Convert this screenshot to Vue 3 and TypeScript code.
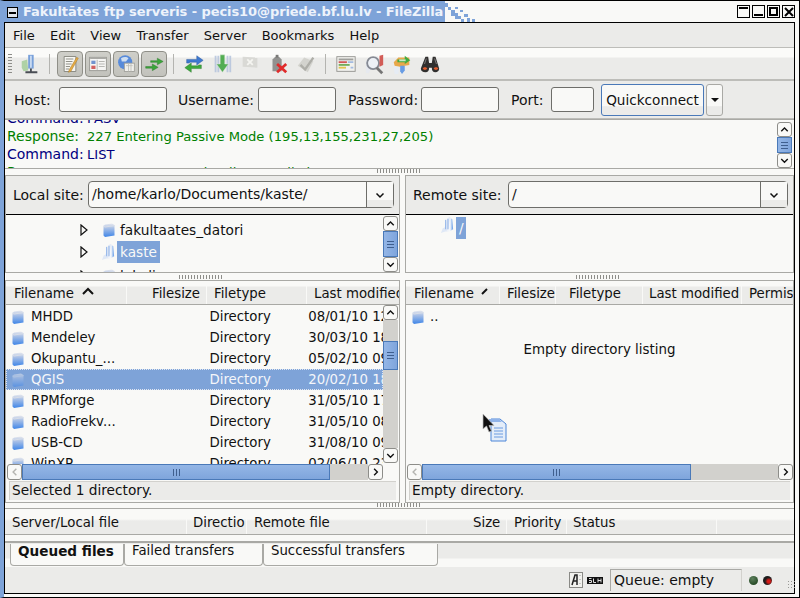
<template>
  <div class="window">
    <svg class="defs" width="0" height="0" aria-hidden="true">
      <defs>
        <linearGradient id="fold" x1="0" y1="0" x2="0" y2="1">
          <stop offset="0" stop-color="#e6e8ee" />
          <stop offset="0.35" stop-color="#a9c0e6" />
          <stop offset="1" stop-color="#3f86e8" />
        </linearGradient>
        <linearGradient id="open" x1="0" y1="0" x2="1" y2="0">
          <stop offset="0" stop-color="#e8edf6" />
          <stop offset="0.6" stop-color="#f6f8fb" />
          <stop offset="1" stop-color="#5d97e6" />
        </linearGradient>
        <symbol id="folder" viewBox="0 0 12 14">
          <path d="M2 1.5 9 0.5 11.5 2V12.5L2 14 0.5 12.5V3Z" fill="url(#fold)" />
          <path d="M0.5 3 2 4 11.5 2.6" fill="none" stroke="#d7dde8" />
        </symbol>
        <symbol id="folderopen" viewBox="0 0 16 18">
          <path d="M8 1 11 0V14L4 16 1 17 3 12 5 11 7 3Z" fill="#dfe8f6" />
          <path d="M10.5 1 13 2 14 13 10 15.5 6 16 9 12Z" fill="url(#open)" />
          <path d="M6 3V13M8.5 2V13" stroke="#8cb0e6" />
        </symbol>
        <symbol id="up" viewBox="0 0 14 14"><path d="M3.5 9 7 5.5 10.5 9" fill="none" stroke="#111" stroke-width="1.5" /></symbol>
        <symbol id="down" viewBox="0 0 14 14"><path d="M3.5 5.5 7 9 10.5 5.5" fill="none" stroke="#111" stroke-width="1.5" /></symbol>
        <symbol id="left" viewBox="0 0 14 14"><path d="M9 3.5 5.5 7 9 10.5" fill="none" stroke="#b5b5b1" stroke-width="1.5" /></symbol>
        <symbol id="right" viewBox="0 0 14 14"><path d="M5.5 3.5 9 7 5.5 10.5" fill="none" stroke="#111" stroke-width="1.5" /></symbol>
      </defs>
    </svg>

    <header class="titlebar">
      <span class="win-btn menu-btn"><i class="bar mid"></i></span>
      <div class="title-fill">
        <span class="title-text">Fakultātes ftp serveris - pecis10@priede.bf.lu.lv - FileZilla</span>
        <svg class="checker" width="32" height="21" viewBox="0 0 32 21">
          <path d="M0 2h3v4h3v3H3V6H0zM6 9h4v3h3v3h3v3h-6v-3H6zM10 6h3v2h-3zM15 9h3v2h-3zM19 13h4v3h-4zM16 18h3v3h-3zM22 17h3v4h-3zM27 18h3v3h-3z" fill="#7ea3d8" />
        </svg>
      </div>
      <div class="win-btns">
        <span class="win-btn"><i class="bar top"></i></span>
        <span class="win-btn"><i class="bar bottom"></i></span>
        <span class="win-btn"><i class="square"></i></span>
        <span class="win-btn close">
          <svg width="10" height="10" viewBox="0 0 10 10"><path d="M1 1 9 9M9 1 1 9" stroke="#000" stroke-width="2" /></svg>
        </span>
      </div>
    </header>

    <div class="frame">
      <nav class="menubar">
        <span v-for="m in menus" :key="m">{{ m }}</span>
      </nav>

      <div class="toolbar">
        <span class="grip"></span>
        <span class="tool first">
          <svg viewBox="0 0 24 24" width="24" height="24">
            <path d="M3 9 9 7 10 19 5 20 3 16Z" fill="#a9cfa0" />
            <rect x="10" y="2" width="6" height="15" fill="#6f9ad8" />
            <rect x="12" y="3" width="2" height="13" fill="#c6d9f2" />
            <path d="M13 17V20M7 21H20" stroke="#3c4048" stroke-width="2" />
          </svg>
        </span>
        <span class="sep s1"></span>
        <span class="tool pressed">
          <svg viewBox="0 0 24 24" width="24" height="24">
            <path d="M5 3H19V21H5Z" fill="#fbfbf7" stroke="#77776f" />
            <path d="M7 6H16M7 9H15M7 12H14M7 15H12M7 18H11" stroke="#77776f" />
            <path d="M20 4 22 5 13 21 10 22 11 19Z" fill="#e8a93a" stroke="#9a6a1a" stroke-width="0.5" />
          </svg>
        </span>
        <span class="tool pressed">
          <svg viewBox="0 0 24 24" width="24" height="24">
            <rect x="2" y="4" width="20" height="16" fill="#fafaf8" stroke="#8c8c86" />
            <path d="M2.5 5H21.5" stroke="#a8a8a4" stroke-width="2" />
            <rect x="4" y="8" width="5" height="4" fill="#6a8fd0" />
            <rect x="4" y="14" width="5" height="4" fill="#d25a5a" />
            <path d="M11 7V19M13 9H20M13 12H20M13 15H20" stroke="#a8a8a4" />
          </svg>
        </span>
        <span class="tool pressed">
          <svg viewBox="0 0 24 24" width="24" height="24">
            <circle cx="11" cy="10" r="8.5" fill="#4f86dc" />
            <path d="M6 5C9 3 13 3 15 5L12 9 7 9Z" fill="#cfe0f5" />
            <rect x="10" y="11" width="12" height="10" fill="#f4f4f0" stroke="#9a9a94" />
            <path d="M12 14H20M15 11V21M18 11V21" stroke="#bcbcb6" />
          </svg>
        </span>
        <span class="tool pressed">
          <svg viewBox="0 0 24 24" width="24" height="24">
            <path d="M8 8H16V5L23 9 16 13V10H8Z" fill="#2fa32f" stroke="#1d6b1d" stroke-width="0.5" />
            <path d="M2 15H10V12L17 16 10 20V17H2Z" fill="#2fa32f" stroke="#1d6b1d" stroke-width="0.5" />
          </svg>
        </span>
        <span class="sep s2"></span>
        <span class="tool plain">
          <svg viewBox="0 0 24 24" width="24" height="24">
            <path d="M4 11V7H15V3L22 8 15 13V10H7V11Z" fill="#2f70cf" stroke="#1c4b93" stroke-width="0.5" />
            <path d="M20 13V17H9V21L2 16 9 11V14H17V13Z" fill="#2ea52e" stroke="#1d6b1d" stroke-width="0.5" />
          </svg>
        </span>
        <span class="tool plain">
          <svg viewBox="0 0 24 24" width="24" height="24">
            <path d="M5 3V21M8 3V21M18 3V21M21 3V21" stroke="#b9c7de" stroke-width="2" />
            <path d="M10 2H15V12H19L12.500 21 6 12H10Z" fill="#46a846" stroke="#dfe8df" stroke-width="0.5" />
          </svg>
        </span>
        <span class="tool plain">
          <svg viewBox="0 0 24 24" width="24" height="24">
            <path d="M4 4 20 5V16L4 15Z" fill="#d8d8d4" />
            <path d="M9 7 15 13M15 7 9 13" stroke="#f6f6f2" stroke-width="2" />
          </svg>
        </span>
        <span class="tool plain">
          <svg viewBox="0 0 24 24" width="24" height="24">
            <path d="M6 7 9 4H13L16 7V20H6Z" fill="#8a8a88" />
            <rect x="9.500" y="2" width="3" height="3" fill="#6e6e6c" />
            <path d="M11 12 21 21M21 12 11 21" stroke="#e01b1b" stroke-width="3" />
          </svg>
        </span>
        <span class="tool plain">
          <svg viewBox="0 0 24 24" width="24" height="24">
            <path d="M3 14 10 5 20 9 14 21Z" fill="#d2d2cc" />
            <path d="M6 13 11 18 20 5" fill="none" stroke="#a9a9a3" stroke-width="2.500" />
          </svg>
        </span>
        <span class="sep s3"></span>
        <span class="tool plain">
          <svg viewBox="0 0 24 24" width="24" height="24">
            <rect x="2" y="4" width="20" height="16" fill="#f2f2ee" stroke="#8d8d89" />
            <path d="M4 7H20" stroke="#9a9a96" stroke-width="2" />
            <path d="M4 10H13" stroke="#d24a4a" stroke-width="2" />
            <path d="M4 13H16" stroke="#6aa84f" stroke-width="2" />
            <path d="M4 16H12" stroke="#e0c040" stroke-width="2" />
            <path d="M14 10H20M17 16H20" stroke="#9db8e0" stroke-width="2" />
          </svg>
        </span>
        <span class="tool plain">
          <svg viewBox="0 0 24 24" width="24" height="24">
            <path d="M3 9 16 3V6L6 22H3Z" fill="#e6e9f0" />
            <circle cx="11" cy="11" r="6.500" fill="#eef2f8" stroke="#7d828c" stroke-width="2" />
            <path d="M15 16 21 22" stroke="#6c6c6c" stroke-width="3" />
            <path d="M18 3 22 2V13L18 15Z" fill="#d0504a" />
          </svg>
        </span>
        <span class="tool plain">
          <svg viewBox="0 0 24 24" width="24" height="24">
            <path d="M3 10 8 5H20V13L9 15 4 14Z" fill="#e8a33d" />
            <path d="M7 7H15V3L21 8 15 12V10H7Z" fill="#32a532" />
            <path d="M9 8H16" stroke="#c9e8c0" stroke-width="2" />
            <path d="M3 15H9L8 23H4Z" fill="#e6edf6" />
            <path d="M10 14H15V19L12 23 10 20Z" fill="#5d96e4" />
          </svg>
        </span>
        <span class="tool plain">
          <svg viewBox="0 0 24 24" width="24" height="24">
            <path d="M7 4H10L11 11H14L15 4H18L22 17C22 20 20 21 18 21 15 21 14 19 14 16H11C11 19 10 21 7 21 4 21 2 20 2 17Z" fill="#22201f" />
            <path d="M4 17C5 15 8 15 9 17 8 19 5 19 4 17ZM16 17C17 15 20 15 21 17 20 19 17 19 16 17Z" fill="#e2501f" />
            <path d="M8 6 6 12M17 6 19 12" stroke="#777" />
          </svg>
        </span>
      </div>

      <div class="quickbar">
        <label class="q-label first-label">Host:</label>
        <input class="q-input host" type="text" />
        <label class="q-label user">Username:</label>
        <input class="q-input username" type="text" />
        <label class="q-label pass">Password:</label>
        <input class="q-input username" type="text" />
        <label class="q-label port-label">Port:</label>
        <input class="q-input port" type="text" />
        <button class="quick-btn" type="button">Quickconnect</button>
        <button class="quick-drop" type="button"><i></i></button>
      </div>

      <section class="log">
        <div class="log-scroll">
          <div v-for="(l, i) in logLines" :key="i" class="log-line" :class="l.kind">
            <span class="log-key">{{ l.key }}</span><span class="log-msg">{{ l.text }}</span>
          </div>
        </div>
        <div class="vbar log-bar">
          <span class="sb-btn"><svg><use href="#up" /></svg></span>
          <span class="sb-thumb vthumb fill"><i></i></span>
          <span class="sb-btn"><svg><use href="#down" /></svg></span>
        </div>
      </section>

      <div class="splitter s-top"><span class="dots"></span></div>

      <div class="panes top-panes">
        <section class="pane left">
          <div class="site-row">
            <span class="site-label local">Local site:</span>
            <div class="combo">
              <span class="combo-text">/home/karlo/Documents/kaste/</span>
              <span class="combo-arrow"><svg><use href="#down" /></svg></span>
            </div>
          </div>
          <div class="tree">
            <div class="tree-scroll">
              <div v-for="t in localTree" :key="t.name" class="tree-row">
                <svg class="expander" width="8" height="12" viewBox="0 0 8 12"><path d="M1 1 7 6 1 11Z" fill="#f9f9f7" stroke="#111" stroke-width="1.2" /></svg>
                <svg v-if="t.open" class="tree-icon open"><use href="#folderopen" /></svg>
                <svg v-else class="tree-icon"><use href="#folder" /></svg>
                <span class="tree-name" :class="{ active: t.open }">{{ t.name }}</span>
              </div>
            </div>
            <div class="vbar tree-bar">
              <span class="sb-btn"><svg><use href="#up" /></svg></span>
              <span class="sb-thumb vthumb fill"><i></i></span>
              <span class="sb-btn"><svg><use href="#down" /></svg></span>
            </div>
          </div>
        </section>

        <section class="pane right">
          <div class="site-row">
            <span class="site-label remote">Remote site:</span>
            <div class="combo">
              <span class="combo-text">/</span>
              <span class="combo-arrow"><svg><use href="#down" /></svg></span>
            </div>
          </div>
          <div class="tree remote-tree">
            <svg class="tree-icon open"><use href="#folderopen" /></svg>
            <span class="tree-name active root">/</span>
          </div>
        </section>
      </div>

      <div class="splitter s-mid">
        <span class="dots"></span>
        <span class="dots"></span>
      </div>

      <div class="panes list-panes">
        <section class="pane left">
          <div class="col-head">
            <span class="hc lc1">Filename<svg class="sort" width="14" height="8" viewBox="0 0 14 8"><path d="M2 7 7 2 12 7" fill="none" stroke="#111" stroke-width="2" /></svg></span>
            <span class="hc lc2">Filesize</span>
            <span class="hc lc3">Filetype</span>
            <span class="hc lc4">Last modified</span>
          </div>
          <div class="list-body">
            <div class="rows">
              <div v-for="r in localFiles" :key="r.name" class="row" :class="{ selected: r.selected }">
                <svg class="file-icon"><use href="#folder" /></svg>
                <span class="r-name">{{ r.name }}</span>
                <span class="r-type">Directory</span>
                <span class="r-date">{{ r.date }}</span>
              </div>
            </div>
            <div class="vbar list-bar">
              <span class="sb-btn"><svg><use href="#up" /></svg></span>
              <span class="trough t1"></span>
              <span class="sb-thumb vthumb"><i></i></span>
              <span class="trough fill"></span>
              <span class="sb-btn"><svg><use href="#down" /></svg></span>
            </div>
          </div>
          <div class="hbar lh">
            <span class="sb-btn"><svg><use href="#left" /></svg></span>
            <span class="sb-thumb hthumb l"><i></i></span>
            <span class="trough fill"></span>
            <span class="sb-btn"><svg><use href="#right" /></svg></span>
          </div>
          <div class="status-line">Selected 1 directory.</div>
        </section>

        <section class="pane right">
          <div class="col-head">
            <span class="hc rc1">Filename<svg class="sort small" width="8" height="8" viewBox="0 0 8 8"><path d="M1 7 6 2" fill="none" stroke="#111" stroke-width="2" /></svg></span>
            <span class="hc rc2">Filesize</span>
            <span class="hc rc3">Filetype</span>
            <span class="hc rc4">Last modified</span>
            <span class="hc rc5">Permis</span>
          </div>
          <div class="list-body remote-body">
            <div class="row updir">
              <svg class="file-icon"><use href="#folder" /></svg>
              <span>..</span>
            </div>
            <div class="empty">Empty directory listing</div>
            <svg class="drag" width="26" height="30" viewBox="0 0 26 30">
              <path d="M9 6H18L24 11V28H9Z" fill="#e4edf9" stroke="#4d86d8" />
              <path d="M7 6H17L20 9H7Z" fill="#8fb3ea" />
              <path d="M12 15H21M12 18H21M12 21H21M12 24H21" stroke="#6a9be0" />
              <path d="M1 1V16L4.500 13 7 19 9.500 18 7 12.500H12Z" fill="#111" stroke="#bbb" stroke-width="0.7" />
            </svg>
          </div>
          <div class="hbar rh">
            <span class="sb-btn"><svg><use href="#left" /></svg></span>
            <span class="sb-thumb hthumb r"><i></i></span>
            <span class="trough fill"></span>
            <span class="sb-btn"><svg><use href="#right" /></svg></span>
          </div>
          <div class="status-line">Empty directory.</div>
        </section>
      </div>

      <div class="splitter s-low"><span class="dots"></span></div>

      <section class="queue">
        <div class="queue-head">
          <span class="qc q1">Server/Local file</span>
          <span class="qc q2">Directio</span>
          <span class="qc q3">Remote file</span>
          <span class="qc q4">Size</span>
          <span class="qc q5">Priority</span>
          <span class="qc q6">Status</span>
          <span class="qc q7"></span>
        </div>
      </section>

      <div class="tabs">
        <span class="tab t-queued">Queued files</span>
        <span class="tab t-failed">Failed transfers</span>
        <span class="tab t-ok">Successful transfers</span>
      </div>

      <footer class="statusbar">
        <svg class="st-a" width="14" height="16" viewBox="0 0 14 16">
          <rect x="0.500" y="0.500" width="13" height="15" fill="#f2f2ee" stroke="#8a8a86" />
          <path d="M3 13 6 3H8V13M4.500 9H8" fill="none" stroke="#222" stroke-width="1.500" />
          <path d="M11 3V4M11 7V8M11 11V12" stroke="#999" />
        </svg>
        <svg class="st-s" width="16" height="7" viewBox="0 0 16 7">
          <rect width="16" height="7" fill="#111" />
          <path d="M2 1.500H4.500M2 3.500H4.500V5.500H2M6.500 1.500V5.500H9M11 1.500V5.500M14 1.500V5.500M11 3.500H14" fill="none" stroke="#ddd" />
        </svg>
        <span class="queue-box">Queue: empty</span>
        <span class="led green"></span>
        <span class="led red"></span>
        <span class="resize"></span>
      </footer>
    </div>
  </div>
</template>

<script setup lang="ts">
const menus = ['File', 'Edit', 'View', 'Transfer', 'Server', 'Bookmarks', 'Help']

const logLines = [
  { key: 'Command:', text: 'PASV', kind: 'cmd' },
  { key: 'Response:', text: '227 Entering Passive Mode (195,13,155,231,27,205)', kind: 'resp' },
  { key: 'Command:', text: 'LIST', kind: 'cmd' },
  { key: 'Response:', text: '150 Here comes the directory listing.', kind: 'resp' },
]

const localTree = [
  { name: 'fakultaates_datori', open: false },
  { name: 'kaste', open: true },
  { name: 'lokali', open: false },
]

const localFiles = [
  { name: 'MHDD', date: '08/01/10 12:41', selected: false },
  { name: 'Mendeley', date: '30/03/10 18:02', selected: false },
  { name: 'Okupantu_...', date: '05/02/10 09:15', selected: false },
  { name: 'QGIS', date: '20/02/10 18:33', selected: true },
  { name: 'RPMforge', date: '31/05/10 17:20', selected: false },
  { name: 'RadioFrekv...', date: '31/05/10 08:47', selected: false },
  { name: 'USB-CD', date: '31/08/10 09:12', selected: false },
  { name: 'WinXP', date: '02/06/10 23:05', selected: false },
]
</script>

<style>
html,
body {
  margin: 0;
  overflow: hidden;
  background: #f9f9f7;
}
</style>

<style scoped>
* {
  box-sizing: border-box;
}

.window {
  --bg: #ebebe9;
  --base: #f9f9f7;
  --line: #a9a9a5;
  width: 800px;
  height: 598px;
  overflow: hidden;
  border-top: 1px solid #000;
  border-right: 1px solid #000;
  border-bottom: 1px solid #000;
  border-left: 4px solid #7ea3d8;
  background: #f9f9f7;
  font-family: 'DejaVu Sans', sans-serif;
  font-size: 13.3px;
  color: #111;
  white-space: nowrap;
}

.defs {
  position: absolute;
}

.titlebar {
  display: flex;
  height: 21px;
  margin-left: -4px;
  background: linear-gradient(90deg, #7ea3d8 0, #7ea3d8 23px, transparent 23px);
}

.title-fill {
  display: flex;
  align-items: flex-start;
  height: 21px;
}

.title-text {
  display: block;
  flex: none;
  width: 422px;
  height: 21px;
  overflow: hidden;
  background: #7ea3d8;
  color: #eef3fb;
  font-size: 13px;
  font-weight: 700;
  line-height: 21px;
  letter-spacing: -0.08px;
}

.checker {
  display: block;
}

.win-btn {
  display: flex;
  flex: none;
  align-items: center;
  justify-content: center;
  width: 13px;
  height: 13px;
  border: 1px solid #000;
  background: #f9f9f7;
}

.menu-btn {
  width: 11px;
  height: 11px;
  margin: 6px 5px 0 7px;
  background: #dfe4ec;
}

.win-btns {
  display: flex;
  gap: 2px;
  margin: 4px 0 0 auto;
  padding-right: 4px;
}

.bar {
  display: block;
  width: 9px;
  height: 2px;
  background: #000;
}

.bar.mid {
  width: 7px;
}

.bar.top {
  margin-bottom: 7px;
}

.bar.bottom {
  margin-top: 7px;
}

.square {
  display: block;
  width: 9px;
  height: 9px;
  border: 2px solid #000;
}

.frame {
  display: flex;
  flex-direction: column;
  width: 791px;
  height: 572px;
  border: 1px solid #000;
  background: var(--bg);
}

.menubar {
  display: flex;
  flex: none;
  gap: 15.2px;
  align-items: center;
  height: 24px;
  padding-left: 8px;
  background: var(--bg);
  font-size: 13px;
}

.toolbar {
  display: flex;
  flex: none;
  align-items: center;
  height: 34px;
  padding-top: 1px;
  border-top: 1px solid #bdbdb9;
  border-bottom: 2px solid #bdbdb9;
  background: linear-gradient(#fbfbf9 0, #fbfbf9 9px, var(--bg) 10px);
}

.grip {
  flex: none;
  width: 4px;
  height: 22px;
  margin-left: 3px;
  background-image: radial-gradient(circle, #8d8d89 0.8px, transparent 1px);
  background-size: 2px 3px;
}

.tool {
  display: flex;
  flex: none;
  align-items: center;
  justify-content: center;
  width: 28px;
  height: 26px;
}

.tool svg {
  display: block;
  width: 22px;
  height: 22px;
  opacity: 0.92;
}

.tool.first {
  margin-left: 4px;
}

.tool.pressed {
  width: 26px;
  margin-right: 2px;
  border: 1px solid #8f8f88;
  border-radius: 4px;
  background: linear-gradient(#cfcfc9, #c2c2bc);
}

.tool.pressed svg {
  width: 20px;
  height: 20px;
}

.sep {
  flex: none;
  width: 1px;
  height: 20px;
  background: #b4b4b0;
}

.s1 {
  margin: 0 7px 0 5px;
}

.s2 {
  margin: 0 6px 0 4px;
}

.s3 {
  margin: 0 6px 0 5px;
}

.quickbar {
  display: flex;
  flex: none;
  align-items: center;
  height: 38px;
  padding-left: 9px;
  border-bottom: 1px solid #bdbdb9;
  background: var(--bg);
  font-size: 14px;
}

.q-label {
  flex: none;
}

.first-label {
  width: 45px;
}

.q-input {
  flex: none;
  height: 25px;
  padding: 0;
  border: 1px solid #6e6e6a;
  border-radius: 3px;
  outline: 0;
  background: var(--base);
}

.host {
  width: 108px;
}

.username {
  width: 78px;
}

.port {
  width: 43px;
}

.user {
  width: 91px;
  padding-left: 11px;
}

.pass {
  width: 85px;
  padding-left: 12px;
}

.port-label {
  width: 52px;
  padding-left: 12px;
}

.quick-btn {
  flex: none;
  width: 103px;
  height: 32px;
  margin-left: 7px;
  padding: 0;
  border: 1px solid #4a79b8;
  border-radius: 3px;
  background: linear-gradient(#f9f9f7 0, #f9f9f7 70%, #ebebe9 72%);
  color: #111;
  font: inherit;
  font-size: 13.6px;
}

.quick-drop {
  display: flex;
  flex: none;
  align-items: center;
  justify-content: center;
  width: 17px;
  height: 32px;
  margin-left: 2px;
  padding: 0;
  border: 1px solid #a9a9a5;
  border-radius: 3px;
  background: linear-gradient(#f9f9f7 0, #f9f9f7 70%, #ebebe9 72%);
}

.quick-drop i {
  width: 0;
  height: 0;
  border: 4px solid transparent;
  border-top-color: #111;
  border-bottom-width: 0;
}

.log {
  display: flex;
  flex: none;
  height: 50px;
  border-top: 1px solid var(--line);
  border-bottom: 1px solid var(--line);
  background: var(--base);
}

.log-scroll {
  flex: 1;
  height: 48px;
  overflow: hidden;
  padding-left: 2px;
}

.log-line {
  height: 18px;
  font-size: 14px;
  line-height: 18px;
  transform: translateY(-11px);
}

.log-key {
  display: inline-block;
  width: 80px;
}

.log-msg {
  font-size: 13.13px;
}

.cmd {
  color: #000080;
}

.resp {
  color: #008000;
}

.vbar {
  display: flex;
  flex: none;
  flex-direction: column;
  width: 15px;
}

.hbar {
  display: flex;
  flex: none;
  height: 16px;
}

.sb-btn {
  display: block;
  flex: none;
  width: 15px;
  height: 15px;
  border: 1px solid #8d8d89;
  border-radius: 3px;
  background: var(--base);
}

.sb-btn svg {
  display: block;
  width: 13px;
  height: 13px;
}

.trough {
  display: block;
  background: #d2d1cd;
}

.fill {
  flex: 1;
}

.sb-thumb {
  display: flex;
  align-items: center;
  justify-content: center;
  border: 1px solid #4a79b8;
  background: linear-gradient(90deg, #94b6e6, #7fa5dc);
}

.vthumb i {
  display: block;
  width: 7px;
  height: 7px;
  border-top: 1px solid #3f5f8f;
  border-bottom: 1px solid #3f5f8f;
  background: linear-gradient(#3f5f8f, #3f5f8f) center / 7px 1px no-repeat;
}

.hthumb {
  background: linear-gradient(#94b6e6, #7fa5dc);
}

.hthumb i {
  display: block;
  width: 7px;
  height: 7px;
  border-left: 1px solid #3f5f8f;
  border-right: 1px solid #3f5f8f;
  background: linear-gradient(#3f5f8f, #3f5f8f) center / 1px 7px no-repeat;
}

.log-bar {
  height: 46px;
  margin: 2px 2px 0 0;
}

.splitter {
  display: flex;
  flex: none;
  justify-content: center;
  background: var(--base);
}

.dots {
  display: block;
  width: 46px;
  height: 4px;
  background-image: radial-gradient(circle, #8d8d89 0.7px, transparent 0.9px);
  background-size: 3px 2px;
}

.s-top,
.s-low {
  padding-right: 2px;
}

.s-top {
  height: 6px;
}

.s-low {
  height: 5px;
}

.s-mid {
  gap: 351px;
  height: 7px;
  padding-top: 2px;
}

.panes {
  display: flex;
  flex: none;
  gap: 5px;
  background: var(--base);
}

.top-panes {
  height: 98px;
}

.list-panes {
  height: 223px;
}

.pane {
  display: flex;
  flex-direction: column;
  border: 1px solid var(--line);
  background: var(--base);
}

.pane.left {
  width: 395px;
}

.pane.right {
  width: 389px;
}

.site-row {
  display: flex;
  flex: none;
  align-items: center;
  height: 39px;
  padding-bottom: 1px;
  border-bottom: 1px solid #000;
  background: var(--bg);
  font-size: 14px;
}

.site-label {
  flex: none;
  padding-left: 7px;
}

.site-label.local {
  width: 82px;
}

.site-label.remote {
  width: 102px;
}

.combo {
  display: flex;
  flex: 1;
  height: 27px;
  margin-right: 5px;
  border: 1px solid #6e6e6a;
  border-radius: 4px;
  background: var(--base);
  line-height: 25px;
}

.combo-text {
  flex: 1;
  padding-left: 3px;
}

.combo-arrow {
  display: block;
  width: 27px;
  padding-top: 6px;
  border-left: 1px solid #6e6e6a;
  background: linear-gradient(#f9f9f7 0, #f9f9f7 70%, #ebebe9 72%);
}

.combo-arrow svg {
  display: block;
  width: 14px;
  height: 14px;
  margin: 0 auto;
}

.tree {
  display: flex;
  flex: 1;
  min-height: 0;
  font-size: 13.7px;
}

.tree-scroll {
  flex: 1;
  height: 57px;
  overflow: hidden;
}

.tree-row {
  display: flex;
  align-items: center;
  height: 22px;
  margin-top: 4px;
  margin-bottom: -4px;
  padding-left: 74px;
}

.tree-row:last-child {
  margin-top: 6px;
}

.expander {
  flex: none;
  margin-right: 15px;
}

.tree-icon {
  flex: none;
  width: 12px;
  height: 14px;
  margin-right: 2px;
}

.tree-icon.open {
  width: 15px;
  height: 17px;
  margin-right: 1px;
  margin-left: -2px;
}

.tree-name {
  display: block;
  height: 22px;
  padding: 0 3px;
  line-height: 22px;
}

.tree-name.active {
  background: #7ea3d8;
  color: #f9f9f7;
}

.tree-bar {
  height: 56px;
  margin: 1px 1px 0 0;
}

.remote-tree {
  align-items: flex-start;
  padding: 2px 0 0 36px;
}

.tree-name.root {
  width: 10px;
  padding: 0 3px;
}

.col-head {
  display: flex;
  flex: none;
  height: 24px;
  border-bottom: 1px solid var(--line);
  background: linear-gradient(#f9f9f7 0, #f9f9f7 5px, var(--bg) 6px);
  line-height: 25px;
}

.hc {
  display: block;
  flex: none;
  height: 23px;
  overflow: hidden;
  border-right: 1px solid #f9f9f7;
  font-size: 13.3px;
}

.lc1 {
  width: 121px;
  padding-left: 8px;
}

.lc2 {
  width: 80px;
  padding-right: 6px;
  text-align: right;
}

.lc3 {
  width: 100px;
  padding-left: 7px;
}

.lc4 {
  flex: 1;
  padding-left: 7px;
  border-right: 0;
}

.rc1 {
  width: 94px;
  padding-left: 8px;
}

.rc2 {
  width: 56px;
  text-align: right;
}

.rc3 {
  width: 87px;
  padding-left: 13px;
}

.rc4 {
  width: 99px;
  padding-left: 6px;
}

.rc5 {
  flex: 1;
  padding-left: 7px;
  border-right: 0;
}

.sort {
  margin-left: 7px;
  vertical-align: 3px;
}

.sort.small {
  margin-left: 7px;
}

.list-body {
  position: relative;
  display: flex;
  flex: none;
  height: 159px;
}

.rows {
  width: 377px;
  overflow: hidden;
  padding-top: 1px;
}

.row {
  display: flex;
  align-items: center;
  height: 21px;
  line-height: 21px;
}

.row.selected {
  outline: 1px dotted #dfe6f2;
  outline-offset: -1px;
  background: #7ea3d8;
  color: #f4f6fa;
}

.row.selected .file-icon {
  opacity: 0.55;
}

.file-icon {
  flex: none;
  width: 12px;
  height: 14px;
  margin-left: 6px;
}

.r-name {
  width: 186px;
  padding-left: 7px;
}

.r-type {
  width: 99px;
}

.r-date {
  width: 75px;
  overflow: hidden;
}

.list-bar {
  height: 158px;
}

.t1 {
  height: 21px;
}

.vthumb {
  height: 29px;
}

.lh,
.rh {
  margin-left: 1px;
}

.hbar .sb-btn {
  width: 15px;
  height: 16px;
}

.hbar .sb-btn svg {
  height: 14px;
}

.hthumb.l {
  width: 308px;
}

.lh {
  width: 376px;
}

.hthumb.r {
  width: 269px;
}

.rh {
  width: 386px;
}

.status-line {
  flex: none;
  height: 19px;
  margin: 1px 3px 0;
  padding-left: 2px;
  border-top: 1px solid #d2d1cd;
  border-left: 1px solid #d2d1cd;
  background: var(--bg);
  font-size: 13.7px;
  line-height: 17px;
}

.updir {
  position: absolute;
  top: 1px;
  left: 0;
  gap: 6px;
}

.remote-body {
  display: block;
}

.empty {
  padding-top: 34px;
  font-size: 13.4px;
  line-height: 21px;
  text-align: center;
}

.drag {
  position: absolute;
  top: 108px;
  left: 76px;
}

.queue {
  flex: none;
  height: 33px;
  border-top: 1px solid var(--line);
  background: var(--base);
}

.queue-head {
  display: flex;
  height: 26px;
  border-bottom: 1px solid var(--line);
  background: linear-gradient(#f9f9f7 0, #f9f9f7 10px, var(--bg) 12px);
  line-height: 27px;
}

.qc {
  display: block;
  flex: none;
  overflow: hidden;
  border-right: 1px solid #f9f9f7;
}

.q1 {
  width: 182px;
  padding-left: 7px;
}

.q2 {
  width: 60px;
  padding-left: 6px;
}

.q3 {
  width: 180px;
  padding-left: 7px;
}

.q4 {
  width: 80px;
  padding-left: 46px;
}

.q5 {
  width: 60px;
  padding-left: 7px;
}

.q6 {
  width: 150px;
  padding-left: 6px;
}

.q7 {
  flex: 1;
  border-right: 0;
}

.tabs {
  display: flex;
  flex: none;
  align-items: flex-start;
  height: 26px;
  padding: 1px 0 0 5px;
  border-top: 2px solid #a9a9a5;
  background: linear-gradient(var(--bg) 0, var(--bg) 15px, #f9f9f7 16px);
}

.tab {
  display: block;
  height: 22px;
  padding-left: 7px;
  border: 1px solid #a9a9a5;
  border-top: 0;
  border-radius: 0 0 4px 4px;
  background: var(--base);
  line-height: 14px;
}

.t-queued {
  width: 114px;
  font-size: 13.6px;
  font-weight: 700;
}

.t-failed {
  width: 139px;
}

.t-ok {
  width: 175px;
}

.statusbar {
  display: flex;
  flex: 1;
  align-items: center;
  padding-left: 564px;
  background: var(--bg);
}

.st-a {
  flex: none;
  margin-right: 4px;
}

.st-s {
  flex: none;
  margin-right: 7px;
}

.queue-box {
  flex: none;
  width: 132px;
  height: 22px;
  margin-right: 2px;
  padding-left: 3px;
  border-top: 1px solid #a9a9a5;
  border-left: 1px solid #a9a9a5;
  border-right: 1px solid #d2d1cd;
  font-size: 14px;
  line-height: 21px;
}

.led {
  flex: none;
  width: 9px;
  height: 9px;
  margin-left: 5px;
  border-radius: 50%;
}

.led.green {
  background: radial-gradient(circle at 40% 30%, #5d7f5d, #123812);
}

.led.red {
  background: radial-gradient(circle at 65% 60%, #d81a16 18%, #1c1c1c 48%);
}

.resize {
  flex: none;
  width: 10px;
  height: 10px;
  margin: 10px 0 0 15px;
  background-image: radial-gradient(circle, #9a9a96 0.7px, transparent 0.9px);
  background-size: 3px 3px;
}
</style>
